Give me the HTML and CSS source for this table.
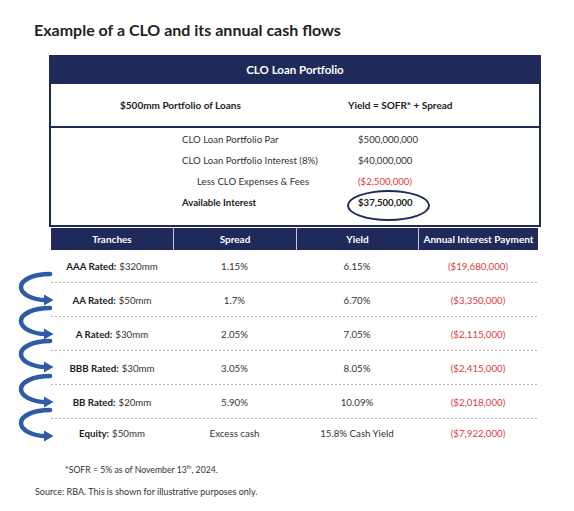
FILE: index.html
```html
<!DOCTYPE html>
<html lang="en">
<head>
<meta charset="utf-8">
<title>Example of a CLO</title>
<link rel="stylesheet" href="styles.css">
</head>
<body>
<h1 class="title">Example of a CLO and its annual cash flows</h1>

<section class="portfolio">
  <div class="pf-head">CLO Loan Portfolio</div>
  <div class="pf-summary">
    <span class="sum-left">$500mm Portfolio of Loans</span>
    <span class="sum-right">Yield = SOFR* + Spread</span>
  </div>
  <div class="pf-detail">
    <div class="line"><span class="lbl">CLO Loan Portfolio Par</span><span class="val">$500,000,000</span></div>
    <div class="line"><span class="lbl">CLO Loan Portfolio Interest (8%)</span><span class="val">$40,000,000</span></div>
    <div class="line"><span class="lbl indent">Less CLO Expenses &amp; Fees</span><span class="val neg">($2,500,000)</span></div>
    <div class="line strong"><span class="lbl">Available Interest</span><span class="val circled">$37,500,000</span></div>
  </div>
</section>

<section class="tranches">
  <div class="gutter">
    <svg class="arrows" width="51" height="219" viewBox="0 0 51 219">
      <g fill="none" stroke="#2f5aa6" stroke-width="4.5" stroke-linecap="round">
        <path d="M50,46 C33,46 21,52 21,59 C21,66 32,72 46,72"/>
        <path d="M50,80 C33,80 21,86 21,93 C21,100 32,106 46,106"/>
        <path d="M50,113 C33,113 21,119 21,126 C21,133 32,139 46,139"/>
        <path d="M50,148 C33,148 21,154 21,161 C21,168 32,174 46,174"/>
        <path d="M50,182 C33,182 21,188 21,195 C21,202 32,208 46,208"/>
      </g>
      <g fill="#2f5aa6">
        <polygon points="44,66.5 53.5,72 44,77.5"/>
        <polygon points="44,100.5 53.5,106 44,111.5"/>
        <polygon points="44,133.5 53.5,139 44,144.5"/>
        <polygon points="44,168.5 53.5,174 44,179.5"/>
        <polygon points="44,202.5 53.5,208 44,213.5"/>
      </g>
    </svg>
  </div>
  <div class="table">
    <div class="thead">
      <div class="th">Tranches</div>
      <div class="th">Spread</div>
      <div class="th">Yield</div>
      <div class="th">Annual Interest Payment</div>
    </div>
    <div class="tr first">
      <div class="td"><b>AAA Rated:</b> $320mm</div>
      <div class="td">1.15%</div>
      <div class="td">6.15%</div>
      <div class="td neg">($19,680,000)</div>
    </div>
    <div class="tr">
      <div class="td"><b>AA Rated:</b> $50mm</div>
      <div class="td">1.7%</div>
      <div class="td">6.70%</div>
      <div class="td neg">($3,350,000)</div>
    </div>
    <div class="tr">
      <div class="td"><b>A Rated:</b> $30mm</div>
      <div class="td">2.05%</div>
      <div class="td">7.05%</div>
      <div class="td neg">($2,115,000)</div>
    </div>
    <div class="tr">
      <div class="td"><b>BBB Rated:</b> $30mm</div>
      <div class="td">3.05%</div>
      <div class="td">8.05%</div>
      <div class="td neg">($2,415,000)</div>
    </div>
    <div class="tr">
      <div class="td"><b>BB Rated:</b> $20mm</div>
      <div class="td">5.90%</div>
      <div class="td">10.09%</div>
      <div class="td neg">($2,018,000)</div>
    </div>
    <div class="tr last">
      <div class="td"><b>Equity:</b> $50mm</div>
      <div class="td">Excess cash</div>
      <div class="td">15.8% Cash Yield</div>
      <div class="td neg">($7,922,000)</div>
    </div>
  </div>
</section>

<p class="note">*SOFR = 5% as of November 13<sup>th</sup>, 2024.</p>
<p class="source">Source: RBA. This is shown for illustrative purposes only.</p>
</body>
</html>
```

FILE: styles.css
```css
* { box-sizing: border-box; }

body {
  margin: 0;
  background: #ffffff;
  color: #333333;
  font-family: Lato, "Open Sans", sans-serif;
}

.title {
  margin: 0;
  padding: 21px 0 0 34px;
  font-size: 16px;
  line-height: 17px;
  font-weight: 700;
  color: #222222;
}

.portfolio {
  margin: 17px 0 0 49px;
  width: 492px;
}

.pf-head {
  height: 29px;
  background: #1f2a5b;
  color: #ffffff;
  font-weight: 700;
  font-size: 11.5px;
  display: flex;
  align-items: center;
  justify-content: center;
}

.pf-summary {
  height: 44px;
  border: 2px solid #1f2a5b;
  border-top: 0;
  display: flex;
  align-items: center;
  font-weight: 700;
  font-size: 10px;
  color: #222222;
}

.sum-left {
  width: 297px;
  padding-left: 69px;
}

.pf-detail {
  height: 99px;
  border: 2px solid #1f2a5b;
  border-top: 0;
  padding-top: 1px;
  font-size: 9.6px;
}

.line {
  display: flex;
  height: 21px;
  line-height: 21px;
}

.lbl {
  width: 307px;
  padding-left: 131px;
}

.lbl.indent {
  padding-left: 146px;
}

.line.strong {
  font-weight: 700;
  color: #222222;
}

.val {
  position: relative;
  display: inline-block;
}

.neg { color: #e0393e; }

.circled::after {
  content: "";
  position: absolute;
  left: -11px;
  top: -2px;
  width: 79px;
  height: 27px;
  border: 2px solid #1f2a5b;
  border-radius: 50%;
}

.tranches {
  display: flex;
  margin-top: 1px;
}

.gutter {
  width: 51px;
  flex: none;
}

.arrows {
  display: block;
  overflow: visible;
}

.table {
  width: 487px;
  font-size: 9.7px;
}

.thead {
  display: grid;
  grid-template-columns: 122px 123px 122px 120px;
  height: 22px;
  background: #1f2a5b;
  color: #ffffff;
  font-weight: 700;
  font-size: 10px;
}

.th {
  display: flex;
  align-items: center;
  justify-content: center;
}

.th + .th {
  border-left: 1px solid #c3c9dc;
}

.tr {
  display: grid;
  grid-template-columns: 122px 123px 122px 120px;
  height: 34px;
  padding-bottom: 1px;
  background: repeating-linear-gradient(to right, #b5b5b5 0 2px, transparent 2px 4px) left bottom / 100% 1px no-repeat;
}

.tr.first { height: 33px; }

.tr.last {
  height: 28px;
  background: none;
}

.td {
  display: flex;
  align-items: center;
  justify-content: center;
  white-space: nowrap;
}

.td b {
  font-weight: 700;
  color: #222222;
  margin-right: 3px;
}

.note {
  margin: 18px 0 0 65px;
  font-size: 8.7px;
  line-height: 10px;
  color: #333333;
}

.note sup {
  font-size: 5px;
  vertical-align: 4px;
  line-height: 0;
}

.source {
  margin: 12px 0 0 35px;
  font-size: 9px;
  line-height: 10px;
  color: #333333;
}
```
